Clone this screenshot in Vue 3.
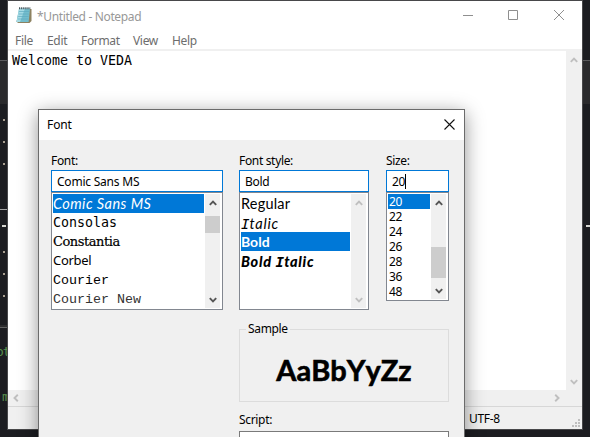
<script setup>
const menus = ['File', 'Edit', 'Format', 'View', 'Help']
const fonts = [
  { name: 'Comic Sans MS', cls: 'comic', selected: true },
  { name: 'Consolas', cls: 'consolas' },
  { name: 'Constantia', cls: 'constantia' },
  { name: 'Corbel', cls: 'corbel' },
  { name: 'Courier', cls: 'courier' },
  { name: 'Courier New', cls: 'courier-new' },
]
const sizes = [20, 22, 24, 26, 28, 36, 48]
const dots = [119, 141, 163, 251, 273, 295]
</script>

<template>
  <div class="desktop">
    <div class="band"></div>
    <div class="rule"></div>
    <i v-for="y in dots" :key="y" class="dot" :style="{ top: y + 'px' }"></i>
    <i class="dash d1"></i><i class="dash d2"></i><i class="dash d3"></i>
    <span class="code c1">ot</span>
    <span class="code c2">m</span>

    <section class="notepad">
      <header class="titlebar">
        <svg class="app-icon" width="16" height="17" viewBox="0 0 16 17">
          <path d="M3.5 2H15.5V14L13.5 16H2L.5 14.5Z" fill="#8d8261" />
          <path d="M3 1.5H14L12.6 15H.5Z" fill="#73bdcc" />
          <path d="M3 1.5H9L4 15H.5Z" fill="#a5dbe5" />
          <path d="M3 4.5H13M2.6 7H12.8M2.2 9.5H12.5M1.8 12H12.3" stroke="#5eabc0" stroke-width=".7" />
          <path d="M3 1.2H14.3" stroke="#47545a" stroke-width="2" stroke-dasharray="1.2 .9" />
        </svg>
        <span class="title">*Untitled - Notepad</span>
        <svg class="controls" width="104" height="12" viewBox="0 0 104 12" fill="none" stroke="#8f8f8f">
          <path d="M0 5.5H10M45.5 .5H54.5V9.5H45.5ZM91 0L101 10M101 0L91 10" />
        </svg>
      </header>
      <nav class="menu">
        <span v-for="m in menus" :key="m" :class="m.toLowerCase()">{{ m }}</span>
      </nav>
      <div class="editor">
        <div class="page">Welcome to VEDA</div>
        <div class="vbar">
          <svg width="8" height="6" viewBox="0 0 8 6"><path d="M.8 4.8L4 1.5L7.2 4.8" /></svg>
          <svg width="8" height="6" viewBox="0 0 8 6"><path d="M.8 1.2L4 4.5L7.2 1.2" /></svg>
        </div>
      </div>
      <div class="hbar">
        <svg width="6" height="8" viewBox="0 0 6 8"><path d="M4.8 .8L1.5 4L4.8 7.2" /></svg>
        <svg width="6" height="8" viewBox="0 0 6 8"><path d="M1.2 .8L4.5 4L1.2 7.2" /></svg>
      </div>
      <footer class="status">
        <span>UTF-8</span>
        <svg width="8" height="8" viewBox="0 0 8 8" fill="#bfbfbf">
          <path d="M6 0h2v2h-2zM3 3h2v2h-2zM6 3h2v2h-2zM0 6h2v2h-2zM3 6h2v2h-2zM6 6h2v2h-2z" />
        </svg>
      </footer>
    </section>

    <section class="dialog">
      <header class="dialog-title">
        <span>Font</span>
        <svg width="11" height="11" viewBox="0 0 11 11" fill="none" stroke="#111" stroke-width="1.1"><path d="M.5 .5L10.5 10.5M10.5 .5L.5 10.5" /></svg>
      </header>
      <div class="body">
        <div class="columns">
          <div class="col font-col">
            <label class="l-font">Font:</label>
            <div class="input"><span class="v-font">Comic Sans MS</span></div>
            <div class="list">
              <ul>
                <li v-for="f in fonts" :key="f.name" :class="{ selected: f.selected }"><span :class="f.cls">{{ f.name }}</span></li>
              </ul>
              <div class="scroll">
                <svg width="8" height="6" viewBox="0 0 8 6"><path d="M.8 4.8L4 1.5L7.2 4.8" /></svg>
                <i class="thumb"></i>
                <svg width="8" height="6" viewBox="0 0 8 6"><path d="M.8 1.2L4 4.5L7.2 1.2" /></svg>
              </div>
            </div>
          </div>
          <div class="col style-col">
            <label class="l-style">Font style:</label>
            <div class="input"><span class="v-style">Bold</span></div>
            <div class="list">
              <ul>
                <li><span class="regular">Regular</span></li>
                <li><span class="italic"><b>I</b>talic</span></li>
                <li class="selected"><span class="bold">Bold</span></li>
                <li><span class="bold-italic">Bold <b>I</b>talic</span></li>
              </ul>
              <div class="scroll disabled">
                <svg width="8" height="6" viewBox="0 0 8 6"><path d="M.8 4.8L4 1.5L7.2 4.8" /></svg>
                <svg width="8" height="6" viewBox="0 0 8 6"><path d="M.8 1.2L4 4.5L7.2 1.2" /></svg>
              </div>
            </div>
          </div>
          <div class="col size-col">
            <label class="l-size">Size:</label>
            <div class="input"><span>20</span><i class="caret"></i></div>
            <div class="list">
              <ul>
                <li v-for="s in sizes" :key="s" :class="{ selected: s === 20 }">{{ s }}</li>
              </ul>
              <div class="scroll">
                <svg width="8" height="6" viewBox="0 0 8 6"><path d="M.8 4.8L4 1.5L7.2 4.8" /></svg>
                <i class="thumb"></i>
                <svg width="8" height="6" viewBox="0 0 8 6"><path d="M.8 1.2L4 4.5L7.2 1.2" /></svg>
              </div>
            </div>
          </div>
        </div>
        <div class="lower">
          <div class="sample">
            <span class="legend">Sample</span>
            <span class="sample-text">AaBbYyZz</span>
          </div>
          <label class="l-script">Script:</label>
          <div class="select"></div>
        </div>
      </div>
    </section>
  </div>
</template>

<style>
body { margin: 0; overflow: hidden; }
</style>

<style scoped>
* { box-sizing: border-box; }
.desktop {
  position: relative; width: 590px; height: 437px; overflow: hidden;
  background: #1c1d21; color: #000;
  font: 12px/15px "Noto Sans", "Open Sans", sans-serif; letter-spacing: -.33px; white-space: nowrap;
}
svg { display: block; flex: none; }
.band { position: absolute; top: 60px; left: 0; width: 590px; height: 44px; background: #2a2a2c; border-top: 1px solid #5b5b5d; }
.rule { position: absolute; top: 325px; left: 0; width: 8px; height: 3px; background: #2c2c2e; border-bottom: 1px solid #626262; }
.dot { position: absolute; left: 3px; width: 2px; height: 2px; background: #a99f91; }
.dash { position: absolute; height: 1px; background: #a5a5a5; }
.d1 { left: 0; top: 209px; width: 7px; }
.d2 { left: 2px; top: 225px; width: 4px; height: 2px; background: #d5d5d0; }
.d3 { left: 586px; top: 225px; width: 4px; height: 2px; background: #d5d5d0; }
.code { position: absolute; color: #578f4d; font: 13px/16px "DejaVu Sans Mono", monospace; letter-spacing: -1px; }
.c1 { left: -4px; top: 344px; }
.c2 { left: 2px; top: 389px; }

.notepad {
  position: absolute; left: 7px; top: 0; width: 576px; height: 430px;
  border: 1px solid #48484a; background: #fff;
  display: flex; flex-direction: column;
}
.titlebar { height: 30px; flex: none; display: flex; align-items: center; padding-left: 8px; color: #989898; }
.app-icon { margin-top: -1px; }
.title { margin-left: 5px; letter-spacing: -.35px; }
.controls { margin-left: auto; margin-right: 15px; }
.menu { height: 18px; flex: none; display: flex; align-items: center; gap: 14px; padding: 1px 0 0 7px; color: #6d6d6d; }
.menu .file { width: 18px; }
.menu .edit { width: 20px; }
.menu .format { width: 38px; }
.menu .view { width: 25px; }
.editor { height: 341px; flex: none; border-top: 2px solid #f0f0f0; display: flex; }
.page { flex: 1; padding: 1px 4px; font: 13.3px/18px "DejaVu Sans Mono", monospace; letter-spacing: 0; }
.vbar { width: 16px; background: #f0f0f0; display: flex; flex-direction: column; justify-content: space-between; align-items: center; padding: 6px 0 5px; }
.hbar { height: 16px; flex: none; background: #f0f0f0; display: flex; justify-content: space-between; align-items: center; padding: 0 22px 0 5px; }
.vbar path, .hbar path { fill: none; stroke: #bfbfbf; stroke-width: 1.9; }
.status { flex: 1; background: #f0f0f0; border-top: 1px solid #d7d7d7; display: flex; align-items: center; padding: 1px 2px 0 461px; justify-content: space-between; }
.status svg { align-self: flex-end; margin-bottom: 2px; }

.dialog {
  position: absolute; left: 38px; top: 109px; width: 427px; height: 390px;
  border: 1px solid #6b6b6b; background: #f0f0f0;
  box-shadow: 0 4px 18px rgba(0, 0, 0, .42);
}
.dialog-title { height: 30px; background: #fff; display: flex; align-items: center; justify-content: space-between; padding: 0 9px 1px 8px; }
.dialog-title span { letter-spacing: -.1px; }
.body { padding: 13px 14px 0 12px; }
.columns { display: flex; align-items: flex-start; }
.col { display: flex; flex-direction: column; }
.font-col { width: 172px; margin-right: 16px; }
.style-col { width: 130px; margin-right: 17px; }
.size-col { width: 63px; }
label { display: block; height: 17px; line-height: 15px; }
.input { height: 22px; border: 1px solid #0078d7; background: #fff; display: flex; align-items: center; padding: 0 0 0 5px; }
.v-font { letter-spacing: -.22px; }
.caret { width: 1px; height: 15px; background: #000; }
.list { height: 118px; border: 1px solid #828790; background: #fff; display: flex; padding: 1px; }
.size-col .list { height: 109px; }
ul { list-style: none; margin: 0; padding: 0; flex: 1; min-width: 0; }
li { height: 19px; line-height: 19px; display: flex; align-items: center; }
.size-col li { height: 15px; line-height: 15px; padding-left: 1px; }
.selected { background: #0078d7; color: #fff; }
.scroll { width: 17px; background: #f0f0f0; border-right: 1px solid #fff; border-left: 1px solid #fff; display: flex; flex-direction: column; align-items: center; padding: 6px 0 5px; }
.scroll path { fill: none; stroke: #555; stroke-width: 1.9; }
.scroll svg:last-child { margin-top: auto; }
.disabled path { stroke: #bfbfbf; }
.thumb { width: 15px; background: #cdcdcd; height: 17px; margin-top: 10px; }
.size-col .thumb { height: 31px; margin-top: 41px; }

.comic { font: italic 14.5px/19px Lato, sans-serif; letter-spacing: .45px; }
.consolas { font: 13.3px/19px "DejaVu Sans Mono", monospace; letter-spacing: 0; }
.constantia { font: 13px/19px "DejaVu Serif", serif; letter-spacing: -.45px; -webkit-text-stroke: .2px #000; }
.corbel { font: 13px/19px "Noto Sans", sans-serif; letter-spacing: -.3px; }
.courier, .courier-new { font: 13.33px/19px "Liberation Mono", monospace; letter-spacing: 0; padding-top: 2px; }
.courier-new { color: #333; }
.regular { font: 14.5px/19px Lato, sans-serif; letter-spacing: .2px; }
.italic { font: italic 14.5px/19px Lato, sans-serif; letter-spacing: .7px; padding-top: 1px; }
.bold { font: bold 14px/19px Lato, sans-serif; letter-spacing: 0; }
.bold-italic { font: italic 900 14.5px/19px Lato, sans-serif; letter-spacing: .7px; padding-top: 2px; }
.italic b { font: italic 14.3px/18px "DejaVu Sans Mono", monospace; letter-spacing: 0; }
.bold-italic b { font: italic bold 14.3px/18px "DejaVu Sans Mono", monospace; letter-spacing: 0; }

.lower { width: 210px; margin: 19px 0 0 188px; }
.sample { position: relative; height: 73px; border: 1px solid #dcdcdc; display: flex; align-items: center; justify-content: center; }
.legend { position: absolute; left: 6px; top: -9px; padding: 0 2px; background: #f0f0f0; line-height: 16px; }
.sample-text { font: bold 29px/36px Lato, sans-serif; letter-spacing: 0; font-kerning: none; -webkit-text-stroke: .6px #000; stroke-linejoin: round; padding-top: 8px; }
.l-script { margin-top: 10px; height: 19px; line-height: 15px; }
.select { height: 24px; border: 1px solid #7a7a7a; background: #fff; }
</style>
